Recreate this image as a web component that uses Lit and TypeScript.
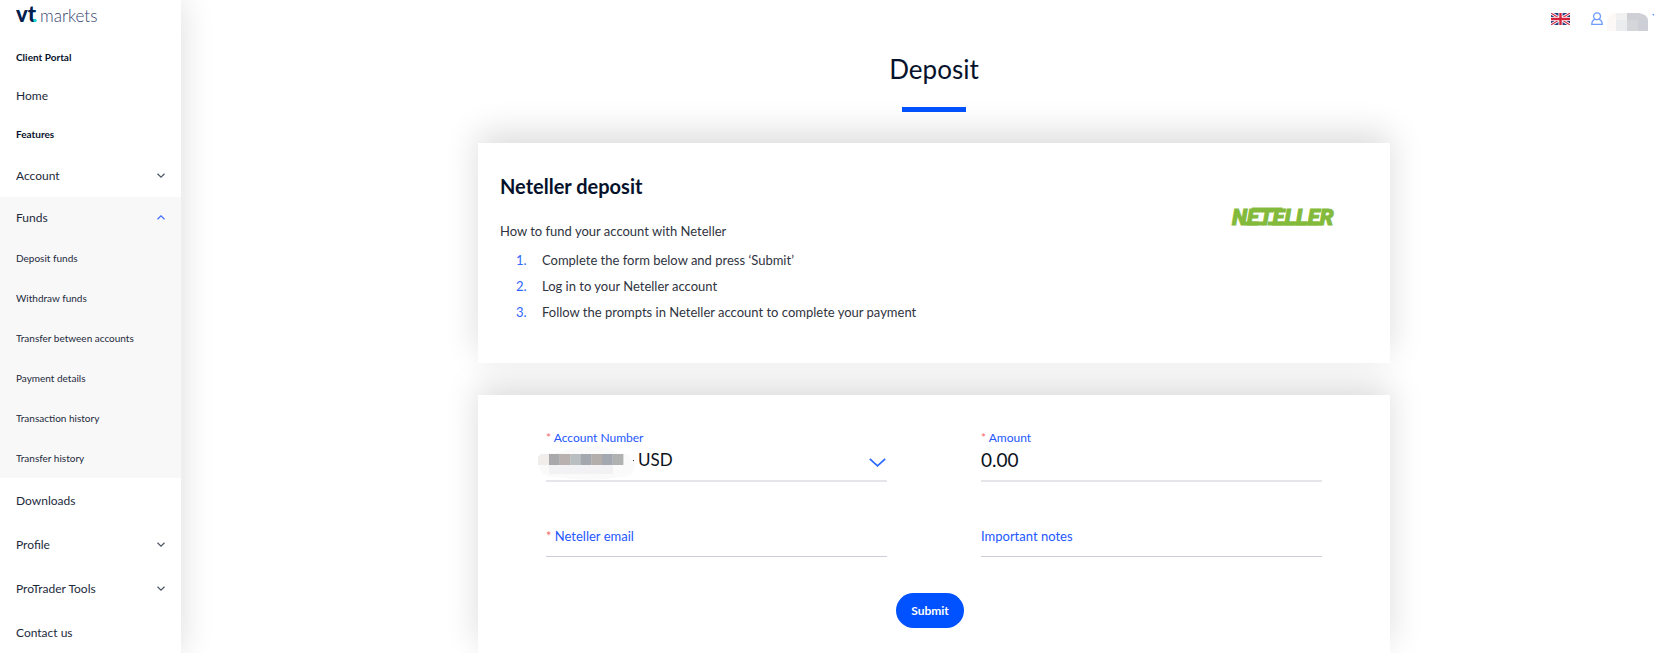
import { LitElement, html, css, svg, nothing } from "lit";
import { customElement, state } from "lit/decorators.js";

interface MenuEntry {
  label: string;
  heading?: boolean;
  children?: string[];
  expandable?: boolean;
}

const MENU: MenuEntry[] = [
  { label: "Client Portal", heading: true },
  { label: "Home" },
  { label: "Features", heading: true },
  { label: "Account", expandable: true },
  {
    label: "Funds",
    expandable: true,
    children: [
      "Deposit funds",
      "Withdraw funds",
      "Transfer between accounts",
      "Payment details",
      "Transaction history",
      "Transfer history",
    ],
  },
  { label: "Downloads" },
  { label: "Profile", expandable: true },
  { label: "ProTrader Tools", expandable: true },
  { label: "Contact us" },
];

const STEPS = [
  "Complete the form below and press ‘Submit’",
  "Log in to your Neteller account",
  "Follow the prompts in Neteller account to complete your payment",
];

const MASK_COLOURS = ["#a9a9ac", "#b8b1b0", "#b9bec0", "#a3a8ae", "#b3adab", "#a3a8b0", "#b0b2b1"];

@customElement("side-menu")
class SideMenu extends LitElement {
  @state() private open = "Funds";

  static styles = css`
    :host {
      display: block;
      background: #fff;
      box-shadow: 0 0 32px rgba(0, 0, 0, 0.14);
      font-family: Lato, "Open Sans", sans-serif;
      color: #1d2a3d;
    }
    .brand {
      display: flex;
      height: 38px;
      padding: 0 16px;
      box-sizing: border-box;
    }
    .brand svg {
      display: block;
    }
    .heading {
      margin: 0;
      padding: 0 16px;
      font-size: 10px;
      line-height: 38px;
      font-weight: 700;
      color: #06122b;
    }
    .item {
      display: flex;
      align-items: center;
      justify-content: space-between;
      width: 100%;
      height: 44px;
      padding: 0 16px;
      box-sizing: border-box;
      border: 0;
      background: none;
      font: inherit;
      font-size: 12px;
      color: inherit;
      text-decoration: none;
      cursor: pointer;
    }
    .item.home {
      height: 39px;
    }
    .group.open {
      background: #f8f8f8;
    }
    .group.open .item {
      height: 41px;
    }
    .sub {
      display: block;
      padding: 0 16px;
      font-size: 10px;
      line-height: 40px;
      color: inherit;
      text-decoration: none;
    }
    .chevron {
      width: 8px;
      height: 5px;
      fill: none;
      stroke: #4b5563;
      stroke-width: 1.2;
    }
    .open .chevron {
      stroke: #3f6bff;
    }
  `;

  private toggle(label: string) {
    this.open = this.open === label ? "" : label;
  }

  private entry(e: MenuEntry) {
    if (e.heading) return html`<h2 class="heading">${e.label}</h2>`;
    if (!e.expandable) {
      return html`<a class="item ${e.label === "Home" ? "home" : ""}" href="#">${e.label}</a>`;
    }
    const open = this.open === e.label;
    return html`
      <div class="group ${open ? "open" : ""}">
        <button class="item" aria-expanded=${open} @click=${() => this.toggle(e.label)}>
          <span>${e.label}</span>
          <svg class="chevron" viewBox="0 0 8 5" aria-hidden="true">
            <path d=${open ? "M.5 4.3 4 .9l3.5 3.4" : "M.5.7 4 4.1 7.5.7"} />
          </svg>
        </button>
        ${open && e.children ? e.children.map((c) => html`<a class="sub" href="#">${c}</a>`) : nothing}
      </div>
    `;
  }

  render() {
    return html`
      <div class="brand">
        <svg width="90" height="30" viewBox="0 0 90 30" role="img" aria-label="vt markets">
          <text x="0" y="22" font-family="Lato" font-weight="900" font-size="22" fill="#03204f">vt</text>
          <circle cx="19" cy="20.500" r="1.700" fill="#14d8dc" />
          <text x="24" y="22" font-family="Lato" font-weight="300" font-size="17" fill="#33426d">markets</text>
        </svg>
      </div>
      <nav>${MENU.map((e) => this.entry(e))}</nav>
    `;
  }
}

@customElement("app-root")
class AppRoot extends LitElement {
  static styles = css`
    :host {
      display: grid;
      grid-template-columns: 181px minmax(0, 1fr);
      min-height: 100vh;
      background: #fff;
      font-family: Lato, "Open Sans", sans-serif;
      color: #2f3440;
      overflow: hidden;
    }
    .page {
      display: flex;
      flex-direction: column;
      padding-left: 33px;
    }
    .topbar {
      display: flex;
      align-items: center;
      justify-content: flex-end;
      height: 38px;
      gap: 21px;
    }
    .plain {
      display: flex;
      align-items: center;
      gap: 4px;
      padding: 0;
      border: 0;
      background: none;
      cursor: pointer;
    }
    .content {
      display: flex;
      flex: 1;
      flex-direction: column;
      width: 66.67%;
      margin: 0 auto;
      padding: 0 24px;
      box-sizing: border-box;
    }
    .title {
      margin: 11px 0 0;
      text-align: center;
      font-size: 26px;
      line-height: 40px;
      font-weight: 400;
      color: #06122b;
    }
    .bar {
      width: 64px;
      height: 5px;
      margin: 18px auto 31px;
      background: #0051ff;
    }
    .card {
      background: #fff;
      box-shadow: 0 -10px 32px rgba(0, 0, 0, 0.14);
    }
    .intro {
      position: relative;
      z-index: 1;
      display: flex;
      justify-content: space-between;
      align-items: flex-start;
      gap: 24px;
      margin-bottom: 32px;
      padding: 28px 52px 38px 22px;
    }
    .subtitle {
      margin: 0 0 16px;
      font-size: 20px;
      line-height: 30px;
      font-weight: 700;
      color: #06122b;
    }
    .lead {
      margin: 0 0 2px;
      font-size: 13px;
      line-height: 28px;
    }
    .steps {
      margin: 0;
      padding: 0;
      list-style: none;
      counter-reset: step;
      font-size: 13px;
      line-height: 26px;
    }
    .step {
      display: flex;
      counter-increment: step;
    }
    .step::before {
      content: counter(step) ".";
      width: 26px;
      margin-left: 16px;
      color: #2f66ff;
    }
    .neteller {
      margin-top: 34px;
    }
    .form {
      flex: 1;
      padding: 32px 68px 24px;
    }
    .fields {
      display: grid;
      grid-template-columns: 1fr 1fr;
      column-gap: 94px;
      row-gap: 41px;
    }
    .field {
      position: relative;
      display: flex;
      flex-direction: column;
    }
    .label {
      font-size: 12px;
      line-height: 22px;
      color: #2457ff;
    }
    .required {
      color: #f56c6c;
    }
    .control {
      width: 100%;
      height: 33px;
      padding: 0 0 10px;
      box-sizing: border-box;
      border: 0;
      border-bottom: 2px solid #e5e6ea;
      border-radius: 0;
      outline: 0;
      background: none;
      appearance: none;
      font: inherit;
      font-size: 19px;
      color: #0c1220;
    }
    .account {
      padding-left: 92px;
      font-size: 17px;
    }
    .float {
      display: grid;
    }
    .float .label,
    .float .control {
      grid-area: 1 / 1;
    }
    .float .label {
      font-size: 13px;
      line-height: 26px;
    }
    .float .control {
      height: 34px;
      border-bottom: 1px solid #cbced6;
    }
    .mask {
      position: absolute;
      left: -8px;
      top: 18px;
      pointer-events: none;
    }
    .arrow {
      position: absolute;
      right: 1px;
      bottom: 15px;
      pointer-events: none;
    }
    .actions {
      display: flex;
      justify-content: center;
      padding: 36px 8px 0 0;
    }
    .submit {
      height: 35px;
      padding: 0 15px;
      border: 0;
      border-radius: 18px;
      background: #0051ff;
      color: #fff;
      font: inherit;
      font-size: 12px;
      line-height: 16px;
      font-weight: 700;
      cursor: pointer;
    }
  `;

  private flag() {
    return html`<svg width="19" height="12" viewBox="0 0 60 38" preserveAspectRatio="none" aria-hidden="true">
      <rect width="60" height="38" fill="#2b3f83" />
      <path d="M0 0 60 38M60 0 0 38" stroke="#fff" stroke-width="9" />
      <path d="M0 0 60 38M60 0 0 38" stroke="#d8354a" stroke-width="3.5" />
      <path d="M30 0V38M0 19H60" stroke="#fff" stroke-width="13" />
      <path d="M30 0V38M0 19H60" stroke="#d3223b" stroke-width="7.5" />
    </svg>`;
  }

  private user() {
    return html`<svg width="12" height="14" viewBox="0 0 12 14" fill="none" stroke="#6e9bff" stroke-width="1.3" aria-hidden="true">
        <circle cx="6" cy="4.3" r="3.4" />
        <path d="M4 7.2C2 8 .8 9.6.8 12.4h10.4C11.2 9.600 10 8 8 7.200" />
      </svg>
      <svg width="47" height="24" viewBox="0 0 47 24" aria-hidden="true">
        <path d="M0 15Q1 6 11 6V24H0Z" fill="#fcf8f5" />
        <path d="M9 6H20V13H9Z" fill="#f1f1f2" />
        <path d="M9 13H20V24H9Z" fill="#e9edee" />
        <path d="M20 6H31V24H20Z" fill="#d5d6da" />
        <path d="M31 6Q41 7 41 14V24H31Z" fill="#cdcfd6" />
        <path d="M20 6H31Q37 6.500 41 13H20Z" fill="#cfd0d5" />
        <path d="M45 7h2v2z" fill="#5e8eff" />
      </svg>`;
  }

  render() {
    return html`
      <side-menu></side-menu>
      <main class="page">
        <header class="topbar">
          <button class="plain" aria-label="Language">${this.flag()}</button>
          <button class="plain" aria-label="User menu">${this.user()}</button>
        </header>
        <div class="content">
          <h1 class="title">Deposit</h1>
          <div class="bar"></div>

          <section class="card intro">
            <div>
              <h2 class="subtitle">Neteller deposit</h2>
              <p class="lead">How to fund your account with Neteller</p>
              <ol class="steps">
                ${STEPS.map((s) => html`<li class="step">${s}</li>`)}
              </ol>
            </div>
            <svg class="neteller" width="108" height="26" viewBox="0 0 108 26" role="img" aria-label="Neteller">
              <g fill="#83ba3b">
                <text x="2" y="20" font-family="Roboto" font-size="22" font-weight="900" font-style="italic" stroke="#83ba3b" stroke-width=".9">NETELLER</text>
                <path d="M22 2.500H52.500L52 6.500H21.500Z" />
                <path d="M15 16.500H34L33.500 20.500H14.500ZM38 16.500H92L91.500 20.500H37.500Z" />
              </g>
            </svg>
          </section>

          <form class="card form" @submit=${(e: Event) => e.preventDefault()}>
            <div class="fields">
              <div class="field">
                <label class="label" for="account"><span class="required">*</span> Account Number</label>
                <select class="control account" id="account">
                  <option>USD</option>
                </select>
                <svg class="mask" width="98" height="36" viewBox="0 0 98 36" aria-hidden="true">
                  <path d="M18 8Q48-4 72 4L80 9H88Q97 13 97 22Q94 33 82 32L68 34Q40 36 24 32Q2 34 1 20V9Z" fill="#fafafa" />
                  <path d="M11 20H75V29H11Z" fill="#f2f2f4" />
                  <path d="M0 13Q1 9 5 9H11V20H0Z" fill="#f0edeb" />
                  ${MASK_COLOURS.map((c, i) => svg`<rect x=${11 + i * 10.6} y="9" width="10.8" height="11" fill=${c} />`)}
                  <rect x="95" y="15" width="1" height="1" fill="#333" />
                </svg>
                <svg class="arrow" width="17" height="9" viewBox="0 0 17 9" fill="none" stroke="#2d6bff" stroke-width="1.8" aria-hidden="true">
                  <path d="M.8.8 8.500 7.800 16.200.8" />
                </svg>
              </div>
              <div class="field">
                <label class="label" for="amount"><span class="required">*</span> Amount</label>
                <input class="control" id="amount" inputmode="decimal" value="0.00" />
              </div>
              <div class="float">
                <label class="label" for="email"><span class="required">*</span> Neteller email</label>
                <input class="control" id="email" type="email" />
              </div>
              <div class="float">
                <label class="label" for="notes">Important notes</label>
                <input class="control" id="notes" />
              </div>
            </div>
            <div class="actions">
              <button class="submit" type="submit">Submit</button>
            </div>
          </form>
        </div>
      </main>
    `;
  }
}
